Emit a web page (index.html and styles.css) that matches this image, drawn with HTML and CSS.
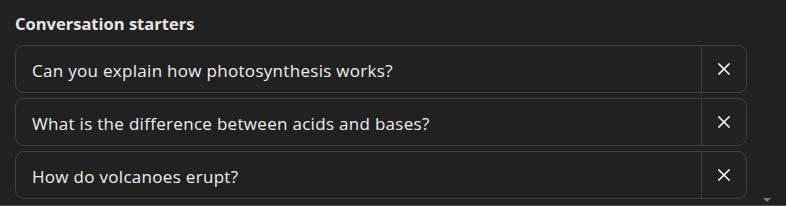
FILE: index.html
```html
<!DOCTYPE html>
<html>
<head>
<meta charset="utf-8">
<link rel="stylesheet" href="styles.css">
</head>
<body>
<div class="page">
  <div class="panel">
    <div class="title">Conversation starters</div>
    <div class="list">
      <div class="starter">
        <div class="starter-text">Can you explain how photosynthesis works?</div>
        <button class="remove" aria-label="Remove">
          <svg width="12" height="12" viewBox="0 0 12 12"><path d="M1 1L11 11M11 1L1 11" stroke="#f2f2f2" stroke-width="1.6" stroke-linecap="square"/></svg>
        </button>
      </div>
      <div class="starter">
        <div class="starter-text">What is the difference between acids and bases?</div>
        <button class="remove" aria-label="Remove">
          <svg width="12" height="12" viewBox="0 0 12 12"><path d="M1 1L11 11M11 1L1 11" stroke="#f2f2f2" stroke-width="1.6" stroke-linecap="square"/></svg>
        </button>
      </div>
      <div class="starter">
        <div class="starter-text">How do volcanoes erupt?</div>
        <button class="remove" aria-label="Remove">
          <svg width="12" height="12" viewBox="0 0 12 12"><path d="M1 1L11 11M11 1L1 11" stroke="#f2f2f2" stroke-width="1.6" stroke-linecap="square"/></svg>
        </button>
      </div>
    </div>
    <div class="scroll-arrow"></div>
  </div>
  <div class="strip"></div>
</div>
</body>
</html>
```
FILE: styles.css
```css
html, body {
  margin: 0;
  padding: 0;
  background: #212121;
}
body {
  width: 786px;
  height: 206px;
  overflow: hidden;
  font-family: "Open Sans", "Noto Sans", sans-serif;
  color: #ececec;
}
.page {
  display: flex;
  flex-direction: column;
  height: 206px;
}
.panel {
  position: relative;
  flex: 1;
  padding: 13px 39px 0 15px;
}
.title {
  font-size: 16.5px;
  font-weight: 700;
  line-height: 22px;
  color: #e6e6e6;
  margin-bottom: 10px;
}
.list {
  display: flex;
  flex-direction: column;
  gap: 5px;
}
.starter {
  display: flex;
  height: 48px;
  box-sizing: border-box;
  border: 1px solid #424242;
  border-radius: 9px;
}
.starter-text {
  flex: 1;
  display: flex;
  align-items: center;
  padding-left: 16px;
  padding-top: 2px;
  font-size: 17px;
  letter-spacing: 0.3px;
  color: #efefef;
}
.remove {
  width: 45px;
  border: none;
  border-left: 1px solid #424242;
  background: transparent;
  display: flex;
  align-items: center;
  justify-content: center;
  padding: 0;
}
.scroll-arrow {
  position: absolute;
  right: 15px;
  bottom: 3px;
  width: 0;
  height: 0;
  border-left: 4px solid transparent;
  border-right: 4px solid transparent;
  border-top: 4px solid #7a7a7a;
}
.strip {
  height: 1px;
  background: #5a4a40;
}
```
